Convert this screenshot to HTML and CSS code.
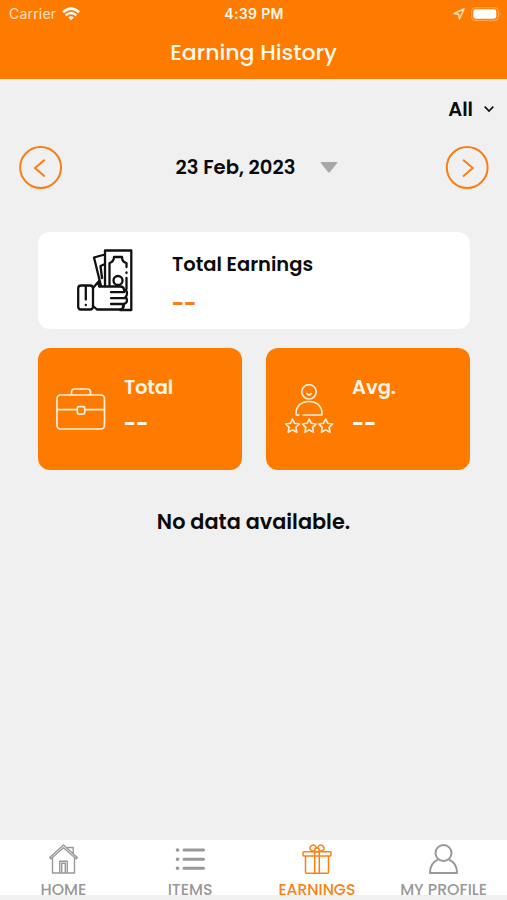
FILE: index.html
```html
<!DOCTYPE html>
<html lang="en">
<head>
<meta charset="utf-8">
<title>Earning History</title>
<link rel="stylesheet" href="styles.css">
</head>
<body>
<div class="app">
  <header class="header">
    <div class="status">
      <div class="status-left"><span class="carrier">Carrier</span>
        <svg width="18" height="14" viewBox="0 0 18 14" fill="none" stroke="#fff" stroke-width="2.5"><path d="M1 5.2Q9-2 17 5.2M3.7 8.2Q9 3.7 14.3 8.2"/><path d="M6.2 10.5Q9 8.1 11.8 10.5L9 13.3Z" fill="#fff" stroke="none"/></svg>
      </div>
      <span class="clock">4:39 PM</span>
      <div class="status-right">
        <svg width="12" height="12" viewBox="0 0 12 12" fill="none" stroke="#ffe2c2" stroke-width="1.4" stroke-linejoin="round"><path d="M11 1L1 5.5L5.7 6.3L6.5 11Z"/></svg>
        <svg width="30" height="14" viewBox="0 0 30 14"><rect x=".6" y=".6" width="26.8" height="12.8" rx="4" fill="none" stroke="#ffa24d" stroke-width="1.2"/><rect x="2.3" y="2.3" width="23" height="9.4" rx="2.4" fill="#fff"/><path d="M28.6 5Q30.6 7 28.6 9Z" fill="#ffa24d"/></svg>
      </div>
    </div>
    <h1 class="title"><span>Earning History</span></h1>
  </header>
  <main class="main">
    <div class="filter"><span class="filter-label">All</span>
      <svg width="12" height="8" viewBox="0 0 12 8" fill="none" stroke="#111" stroke-width="1.7"><path d="M1.7 1.7L6 6L10.3 1.7"/></svg>
    </div>
    <div class="date-row">
      <svg width="44" height="44" viewBox="0 0 44 44" fill="none" stroke="#f97f14" stroke-width="2"><circle cx="22.6" cy="22.5" r="20.4"/><path d="M26.2 15.3L17 23.1L26.2 30.9" stroke-linecap="round"/></svg>
      <div class="date"><span class="date-text">23 Feb, 2023</span>
        <svg width="18" height="11" viewBox="0 0 18 11"><path d="M1.2 0H16.8Q18 0 17.2 1L10 10Q9 11 8 10L.8 1Q0 0 1.2 0Z" fill="#a8a8a8"/></svg>
      </div>
      <svg width="44" height="44" viewBox="0 0 44 44" fill="none" stroke="#f97f14" stroke-width="2"><circle cx="22.2" cy="22.5" r="20.4"/><path d="M18.6 15.3L27.8 23.1L18.6 30.9" stroke-linecap="round"/></svg>
    </div>
    <section class="card earnings">
      <svg width="56" height="63" viewBox="0 0 56 63" fill="none" stroke="#111" stroke-width="2.3" stroke-linecap="round" stroke-linejoin="round">
        <path d="M28 1.5H54.3V61H43M28 1.5V37M26 6L17 8.5L24 37M28 15L23.5 17L25 29M28 36V22"/>
        <path d="M49.5 18V14Q45 13 45 8H37Q37 12.5 32.5 14V36M49.5 23.5V24M49.5 29V40"/>
        <circle cx="41" cy="31.5" r="4.5"/>
        <path d="M16 39L22 32V37.5H43Q47 37.5 47 41Q50 41 50 44.5Q50 47 48.5 48Q50 49 50 51.5Q50 54 47 55Q47 60.5 42.5 60.5H20L16 57M34 43.2H47M34 49.2H48M34 55H47M46 56V60"/>
        <path d="M4 36.5H13Q16 36.5 16 39.5V57.5Q16 60.5 13 60.5H4Q1.2 60.5 1.2 57.5V39.5Q1.2 36.5 4 36.5ZM8.8 37V50.5M8.8 56V56.2"/>
      </svg>
      <div class="copy"><h2>Total Earnings</h2><p class="value">--</p></div>
    </section>
    <div class="stats">
      <section class="card stat">
        <svg class="brief" width="50" height="44" viewBox="0 0 50 44" fill="none" stroke="#fff1df" stroke-width="1.7"><rect x="1" y="8" width="47.5" height="34" rx="3.5"/><path d="M15.5 8V5Q15.5 2 18.5 2H31.5Q34.5 2 34.5 5V8M1 22.7H21M29 22.7H49"/><rect x="21.3" y="19.7" width="7.4" height="7.4" rx="1.5"/></svg>
        <div class="copy"><h2 class="total">Total</h2><p class="value">--</p></div>
      </section>
      <section class="card stat">
        <svg class="rating" width="50" height="51" viewBox="0 0 50 51" fill="none" stroke="#fff1df" stroke-width="1.6" stroke-linejoin="round"><circle cx="25" cy="7.8" r="7.2"/><path d="M22.3 9Q25 12.7 27.7 9M15.5 31H12V29.5C12 22 17.5 17.5 25 17.5S38 22 38 29.5V31H18.5"/>
          <g><path id="star" d="M8.5 35L10.6 39.3L15.4 40L11.9 43.4L12.8 48.2L8.5 45.9L4.2 48.2L5.1 43.4L1.6 40L6.4 39.3Z"/><use href="#star" x="16.7"/><use href="#star" x="33.2"/></g></svg>
        <div class="copy"><h2 class="avg">Avg.</h2><p class="value">--</p></div>
      </section>
    </div>
    <p class="empty"><span>No data available.</span></p>
  </main>
  <nav class="nav">
    <a class="tab"><svg width="30" height="32" viewBox="0 0 30 32" fill="none" stroke="#999" stroke-width="1.4" stroke-linejoin="round"><path d="M4.5 13.5V29H26.5V13.5M1.7 13.5L15.5 1L29.3 13.5L28.1 14.8L15.5 3.7L2.9 14.8ZM19.5 4.7V3.5H25.2V9.8M11.7 29V17.3H19.3V29M13.7 29V19.3H17.3V29"/></svg><span class="label">HOME</span></a>
    <a class="tab"><svg width="30" height="32" viewBox="0 0 30 32" stroke="#999" stroke-width="3" stroke-linecap="round"><path d="M9 6H28.5M9 15.2H28.5M9 24.2H28.5"/><path d="M2.5 6H2.6M2.5 15.2H2.6M2.5 24.2H2.6" stroke-width="3.6"/></svg><span class="label">ITEMS</span></a>
    <a class="tab active"><svg width="30" height="32" viewBox="0 0 30 32" fill="none" stroke="#fb8115" stroke-width="1.5" stroke-linejoin="round"><rect x="1" y="7.7" width="28" height="4.3" rx="1"/><path d="M3.5 12V28.3Q3.5 29.3 4.5 29.3H25.5Q26.5 29.3 26.5 28.3V12M12.7 7.7V29.3M17.3 7.7V29.3M12.5 7C8 7.5 7 4.5 8.8 2.2C10.8-.2 14 1 14.5 4.5M17.5 7C22 7.5 23 4.5 21.2 2.2C19.2-.2 16 1 15.5 4.5"/><rect x="12.8" y="4" width="4.4" height="3.7" rx="1.5"/></svg><span class="label earn">EARNINGS</span></a>
    <a class="tab"><svg width="30" height="32" viewBox="0 0 30 32" fill="none" stroke="#999" stroke-width="2" stroke-linejoin="round"><circle cx="14.5" cy="9" r="8"/><path d="M9 15.7C3.5 18 1 22.5 1 29H28C28 22.5 25.5 18 20 15.7"/></svg><span class="label">MY PROFILE</span></a>
  </nav>
</div>
</body>
</html>
```
FILE: styles.css
```css
* { box-sizing: border-box; }
body { margin: 0; font-family: Poppins, Inter, sans-serif; color: #0b0b0b; background: #f0f0f0; }
h1, h2, p { margin: 0; }
svg { display: block; flex: none; }
.app { height: 900px; display: flex; flex-direction: column; }
.header { height: 79px; background: #ff7b00; color: #fff8ed; }
.status { height: 27px; display: grid; grid-template-columns: 1fr auto 1fr; align-items: center; padding: 0 6px 0 9px; font-family: Inter, sans-serif; font-size: 14px; }
.status-left, .status-right { display: flex; align-items: center; gap: 6px; }
.status-right { justify-content: flex-end; }
.carrier { color: #ffe4c6; letter-spacing: .2px; }
.clock { font-weight: 600; font-size: 14px; letter-spacing: .35px; margin-right: 2px; }
.title { text-align: center; font-weight: 500; font-size: 22px; line-height: 51px; }
.main { flex: 1; }
.filter { display: flex; align-items: center; justify-content: flex-end; gap: 10px; height: 60px; padding-right: 12px; font-size: 19.5px; font-weight: 600; }
.date-row { height: 56px; display: flex; align-items: center; justify-content: space-between; padding: 0 18px; }
.date { display: flex; align-items: center; gap: 25px; margin-left: 7px; font-size: 19.6px; font-weight: 600; }
.card { border-radius: 12px; display: flex; }
.earnings { height: 97px; margin: 37px 37px 0 38px; padding: 17px 0 0 39px; background: #fff; gap: 39px; }
.copy h2 { font-size: 19.5px; line-height: 24px; font-weight: 600; }
.value { font-size: 21px; line-height: 28px; font-weight: 700; }
.earnings .copy { padding-top: 4px; }
.earnings .value { color: #f97f14; padding-top: 13px; }
.stats { display: grid; grid-template-columns: 1fr 1fr; gap: 24px; margin: 19px 37px 0 38px; }
.stat { height: 122px; background: #ff7b00; color: #fff5e8; padding: 28px 0 0 18px; gap: 18px; }
.total { letter-spacing: -.2px; }
.stat .value { padding-top: 10px; }
.brief { margin-top: 11px; }
.rating { margin-top: 8px; }
.empty { text-align: center; margin-top: 38px; font-size: 20.8px; line-height: 28px; font-weight: 600; }
.nav { height: 60px; display: grid; grid-template-columns: repeat(4, 1fr); background: #fff; border-bottom: 5px solid #f0f0f0; }
.tab { display: flex; flex-direction: column; align-items: center; padding-top: 4px; height: 60px; color: #999; }
.label { font-size: 15.8px; line-height: 20px; margin-top: 4px; white-space: nowrap; font-weight: 500; }
.active { color: #fb8115; }
.earn { font-weight: 500; font-size: 15.6px; }
```
